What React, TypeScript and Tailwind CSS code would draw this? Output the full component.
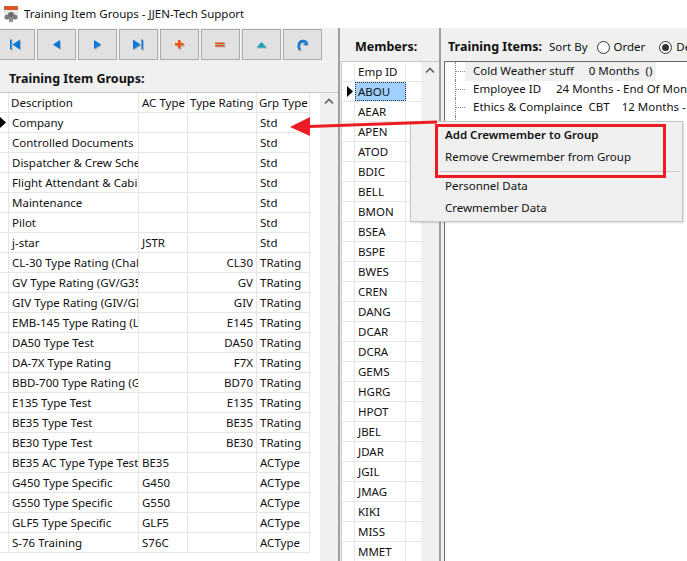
import React from "react";

const FONT = "font-['Noto_Sans',sans-serif]";

const groups: [string, string, string, string][] = [
  ["Company", "", "", "Std"],
  ["Controlled Documents", "", "", "Std"],
  ["Dispatcher & Crew Sche", "", "", "Std"],
  ["Flight Attendant & Cabi", "", "", "Std"],
  ["Maintenance", "", "", "Std"],
  ["Pilot", "", "", "Std"],
  ["j-star", "JSTR", "", "Std"],
  ["CL-30 Type Rating (Chal", "", "CL30", "TRating"],
  ["GV Type Rating (GV/G35", "", "GV", "TRating"],
  ["GIV Type Rating (GIV/GI", "", "GIV", "TRating"],
  ["EMB-145 Type Rating (L", "", "E145", "TRating"],
  ["DA50 Type Test", "", "DA50", "TRating"],
  ["DA-7X Type Rating", "", "F7X", "TRating"],
  ["BBD-700 Type Rating (G", "", "BD70", "TRating"],
  ["E135 Type Test", "", "E135", "TRating"],
  ["BE35 Type Test", "", "BE35", "TRating"],
  ["BE30 Type Test", "", "BE30", "TRating"],
  ["BE35 AC Type Type Test", "BE35", "", "ACType"],
  ["G450 Type Specific", "G450", "", "ACType"],
  ["G550 Type Specific", "G550", "", "ACType"],
  ["GLF5 Type Specific", "GLF5", "", "ACType"],
  ["S-76 Training", "S76C", "", "ACType"],
];

const members = ["AEAR","APEN","ATOD","BDIC","BELL","BMON","BSEA","BSPE","BWES","CREN","DANG","DCAR","DCRA","GEMS","HGRG","HPOT","JBEL","JDAR","JGIL","JMAG","KIKI","MISS","MMET"];

const blue = "#0a78d7";
const icons: React.ReactNode[] = [
  <path key="a" d="M0 .5h1.6v10H0zM2.5 5.5L10 .5v10z" fill={blue} />,
  <path key="b" d="M2 5.5l7-4.5v9z" fill={blue} />,
  <path key="c" d="M2 1l7 4.5L2 10z" fill={blue} />,
  <path key="d" d="M0 .5l7.5 5-7.5 5zM8.4 .5H10v10H8.4z" fill={blue} />,
  <path key="e" d="M4 1h2.4v3H9.5v2.4H6.4v3H4v-3H1V4h3z" fill="#e8500f" />,
  <path key="f" d="M0 3.6h9.5v1.5H0zM0 5.9h9.5v1.5H0z" fill="#e8500f" />,
  <path key="g" d="M5.5 3l5 5.4H.5z" fill="#12a3b8" />,
  <g key="h"><path d="M2.8 11C.2 7.2 1.8 2 6 2c1.2 0 2 .3 2.8 1" fill="none" stroke={blue} strokeWidth="2.4" /><path d="M6 6l4.5-4.5V6z" fill={blue} /></g>,
];

function ScrollUp() {
  return (
    <svg width="10" height="7" viewBox="0 0 10 7"><path d="M1 5.5L5 1.5l4 4" fill="none" stroke="#606060" strokeWidth="1.6" /></svg>
  );
}

function Radio({ on }: { on?: boolean }) {
  return (
    <span className="flex h-[13px] w-[13px] items-center justify-center rounded-full border border-[#333] bg-white">
      {on && <span className="h-[7px] w-[7px] rounded-full bg-[#333]" />}
    </span>
  );
}

function TreeRow({ text, sel }: { text: string; sel?: boolean }) {
  return (
    <div className="flex h-[18px] items-start whitespace-pre">
      <span className="ml-[10px] h-[18px] w-[10px] shrink-0 border-l border-dotted border-[#888] pt-[9px]">
        <span className="block border-t border-dotted border-[#888]" />
      </span>
      <span className={`pl-[8px] leading-[18px] ${sel ? "h-[19px] w-[191px] shrink-0 bg-[#f0f0f0]" : ""}`}>{text}</span>
    </div>
  );
}

const cell = "overflow-hidden whitespace-nowrap border-r border-[#e6e6e6]";

export default function App() {
  return (
    <div className={`relative h-[561px] w-[687px] overflow-hidden bg-white text-[11.5px] leading-[16px] text-[#111] ${FONT}`}>
      {/* Title bar */}
      <div className="flex h-[28px] items-center bg-white">
        <svg className="ml-[3px] mr-[5px]" width="16" height="16" viewBox="0 0 16 16">
          <rect x="1" y="0" width="14" height="4" fill="#d9572f" />
          <rect x="1" y="4" width="14" height="4" fill="#e8e8e8" />
          <circle cx="8" cy="9" r="3" fill="#6d6d6d" />
          <circle cx="4" cy="11" r="2.6" fill="#7c7c7c" />
          <circle cx="12" cy="11" r="2.6" fill="#7c7c7c" />
          <rect x="6" y="11" width="4" height="5" fill="#8d8d8d" />
        </svg>
        <span>Training Item Groups - JJEN-Tech Support</span>
      </div>

      {/* Body */}
      <div className="flex h-[533px] bg-[#f0f0f0]">
        {/* Left panel */}
        <div className="flex w-[338px] shrink-0 flex-col overflow-hidden">
          <div className="ml-[-4px] mt-[1px] flex h-[31px] shrink-0 gap-[2px]">
            {icons.map((ic, i) => (
              <div key={i} className="flex h-[31px] w-[39px] items-center justify-center border border-[#ababab] bg-[#e1e1e1]">
                <svg width="11" height="11" viewBox="0 0 11 11" className="overflow-visible drop-shadow-[1px_1px_0_rgba(0,0,0,0.2)]">{ic}</svg>
              </div>
            ))}
          </div>
          <div className="ml-[9px] mt-[10px] h-[21px] shrink-0 text-[12.5px] font-bold leading-[18px]">Training Item Groups:</div>
          <div className="mt-[1px] flex min-h-0 flex-1 border-t border-[#c8c8c8]">
            <div className="w-[320px] bg-white leading-[20px]">
              <div className="flex h-[20px] w-[310px] border-b border-[#e6e6e6]">
                <div className="w-[9px] border-r border-[#e6e6e6]" />
                <div className={`w-[130px] pl-[2px] ${cell}`}>Description</div>
                <div className={`w-[49px] pl-[3px] ${cell}`}>AC Type</div>
                <div className={`w-[69px] pl-[2px] ${cell}`}>Type Rating</div>
                <div className={`w-[53px] pl-[2px] ${cell}`}>Grp Type</div>
              </div>
              {groups.map((g, i) => (
                <div key={i} className="flex h-[20px] w-[310px] border-b border-[#e6e6e6]">
                  <div className="flex w-[9px] items-center overflow-hidden border-r border-[#e6e6e6]">
                    {i === 0 && <svg width="6" height="11" viewBox="0 0 6 11"><path d="M0 0l6 5.5L0 11z" fill="#000" /></svg>}
                  </div>
                  <div className={`w-[130px] pl-[3px] ${cell}`}>{g[0]}</div>
                  <div className={`w-[49px] pl-[3px] ${cell}`}>{g[1]}</div>
                  <div className={`w-[69px] pr-[3px] text-right ${cell}`}>{g[2]}</div>
                  <div className={`w-[53px] pl-[3px] ${cell}`}>{g[3]}</div>
                </div>
              ))}
            </div>
            <div className="flex w-[18px] justify-center bg-[#f0f0f0] pt-[5px]"><ScrollUp /></div>
          </div>
        </div>
        <div className="w-[2px] shrink-0 bg-[#a0a0a0]" />

        {/* Members */}
        <div className="flex w-[99px] shrink-0 flex-col overflow-hidden">
          <div className="ml-[15px] mt-[10px] h-[23px] shrink-0 text-[12.5px] font-bold leading-[18px]">Members:</div>
          <div className="ml-[1px] flex min-h-0 flex-1 border-l border-t border-[#c8c8c8] leading-[20px]">
            <div className="w-[79px] bg-white">
              <div className="flex h-[20px] border-b border-[#e6e6e6]">
                <div className="w-[13px] border-r border-[#e6e6e6]" />
                <div className="w-[51px] border-r border-[#e6e6e6] pl-[3px]">Emp ID</div>
              </div>
              <div className="flex h-[20px] border-b border-[#e6e6e6]">
                <div className="flex w-[13px] items-center justify-end pr-[2px]">
                  <svg width="6" height="11" viewBox="0 0 6 11"><path d="M0 0l6 5.5L0 11z" fill="#000" /></svg>
                </div>
                <div className="h-[19px] w-[51px] border border-dotted border-[#333] bg-[#9fd0ff] pl-[2px] leading-[18px]">ABOU</div>
              </div>
              {members.map((m) => (
                <div key={m} className="flex h-[20px] border-b border-[#e6e6e6]">
                  <div className="w-[13px] border-r border-[#e6e6e6]" />
                  <div className="w-[51px] border-r border-[#e6e6e6] pl-[3px]">{m}</div>
                </div>
              ))}
            </div>
            <div className="flex w-[18px] justify-center bg-[#f0f0f0] pt-[5px]"><ScrollUp /></div>
          </div>
        </div>
        <div className="w-[2px] shrink-0 bg-[#a0a0a0]" />

        {/* Training items */}
        <div className="flex min-w-0 flex-1 flex-col overflow-hidden">
          <div className="ml-[7px] mt-[10px] flex h-[23px] shrink-0 items-start whitespace-nowrap leading-[18px]">
            <span className="text-[12.5px] font-bold">Training Items:</span>
            <span className="ml-[7px]">Sort By</span>
            <span className="ml-[9px] mt-[3px]"><Radio /></span>
            <span className="ml-[4px]">Order</span>
            <span className="ml-[14px] mt-[3px]"><Radio on /></span>
            <span className="ml-[4px]">Des</span>
          </div>
          <div className="ml-[3px] min-h-0 flex-1 overflow-hidden whitespace-nowrap border-l border-t border-[#696969] bg-white">
            <TreeRow text="Cold Weather stuff     0 Months  ()" sel />
            <TreeRow text="Employee ID     24 Months - End Of Mon" />
            <TreeRow text="Ethics & Complaince  CBT    12 Months -" />
            <TreeRow text="SIDA Badge  24 Months  ()" />
          </div>
        </div>
      </div>

      {/* Context menu */}
      <div className="absolute left-[410px] top-[121px] h-[101px] w-[273px] border border-[#c4c4c4] bg-[#f0f0f0] pl-[34px] shadow-[1px_1px_2px_rgba(0,0,0,0.15)]">
        <div className="flex h-[22px] items-center pt-[3px] font-semibold">Add Crewmember to Group</div>
        <div className="flex h-[22px] items-center pt-[3px]">Remove Crewmember from Group</div>
        <div className="ml-[-5px] mr-[2px] mt-[5px] h-px bg-[#c8c8c8]" />
        <div className="mt-[3px] flex h-[22px] items-center">Personnel Data</div>
        <div className="flex h-[22px] items-center">Crewmember Data</div>
      </div>

      {/* Callouts */}
      <div className="absolute left-[435px] top-[124px] h-[54px] w-[231px] border-[3px] border-[#ed1c24]" />
      <svg className="absolute left-[285px] top-[112px]" width="160" height="30" viewBox="0 0 160 30">
        <path d="M152 10L24 14.5" stroke="#ed1c24" strokeWidth="3" />
        <path d="M5 15L25 5v19z" fill="#ed1c24" />
      </svg>
    </div>
  );
}
